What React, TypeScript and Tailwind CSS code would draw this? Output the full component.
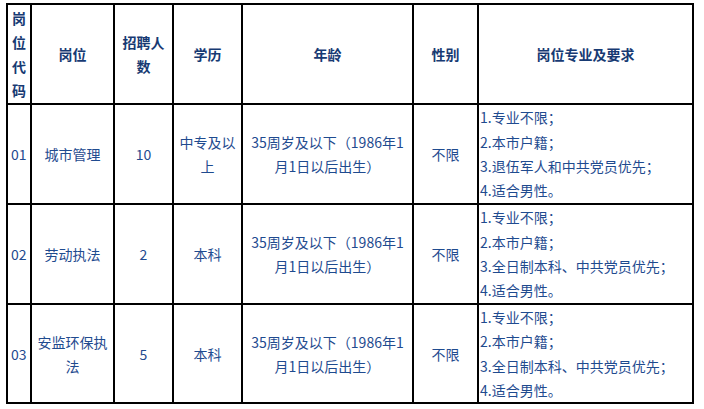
const headers = ["岗位", "招聘人\n数", "学历", "年龄", "性别", "岗位专业及要求"];

const rows = [
  {
    code: "01",
    name: "城市管理",
    count: "10",
    edu: "中专及以\n上",
    reqs: ["1.专业不限；", "2.本市户籍；", "3.退伍军人和中共党员优先；", "4.适合男性。"],
  },
  {
    code: "02",
    name: "劳动执法",
    count: "2",
    edu: "本科",
    reqs: ["1.专业不限；", "2.本市户籍；", "3.全日制本科、中共党员优先；", "4.适合男性。"],
  },
  {
    code: "03",
    name: "安监环保执\n法",
    count: "5",
    edu: "本科",
    reqs: ["1.专业不限；", "2.本市户籍；", "3.全日制本科、中共党员优先；", "4.适合男性。"],
  },
];

const cell = "bg-white flex items-center justify-center text-center whitespace-pre-line";

const App = () => {
  return (
    <div
      className="min-h-screen bg-white pt-[3px] pl-[6px] text-[14px] leading-[24px] text-[#1f4b8f]"
      style={{ fontFamily: '"Noto Sans CJK SC", "Noto Sans", sans-serif' }}
    >
      <div className="grid w-fit grid-cols-[22px_81px_57px_67px_169px_63px_213px] grid-rows-[98px_98px_98px_97px] gap-[2px] bg-black p-[2px]">
        <div className="bg-white flex items-center justify-center text-center font-bold text-[#173a73]">
          岗<br />位<br />代<br />码
        </div>
        {headers.map((h) => (
          <div key={h} className={`${cell} font-bold text-[#173a73]`}>
            {h}
          </div>
        ))}
        {rows.map((r) => (
          <>
            <div key={r.code + "c"} className="bg-white flex items-center pl-[3px]">
              {r.code}
            </div>
            <div key={r.code + "n"} className={cell}>
              {r.name}
            </div>
            <div key={r.code + "k"} className={cell}>
              {r.count}
            </div>
            <div key={r.code + "e"} className={cell}>
              {r.edu}
            </div>
            <div key={r.code + "a"} className={cell}>
              {"35周岁及以下（1986年1\n月1日以后出生）"}
            </div>
            <div key={r.code + "g"} className={cell}>
              不限
            </div>
            <div key={r.code + "r"} className="bg-white flex flex-col justify-center pl-[1px] leading-[24.3px]">
              {r.reqs.map((q) => (
                <div key={q}>{q}</div>
              ))}
            </div>
          </>
        ))}
      </div>
    </div>
  );
};

export default App;
